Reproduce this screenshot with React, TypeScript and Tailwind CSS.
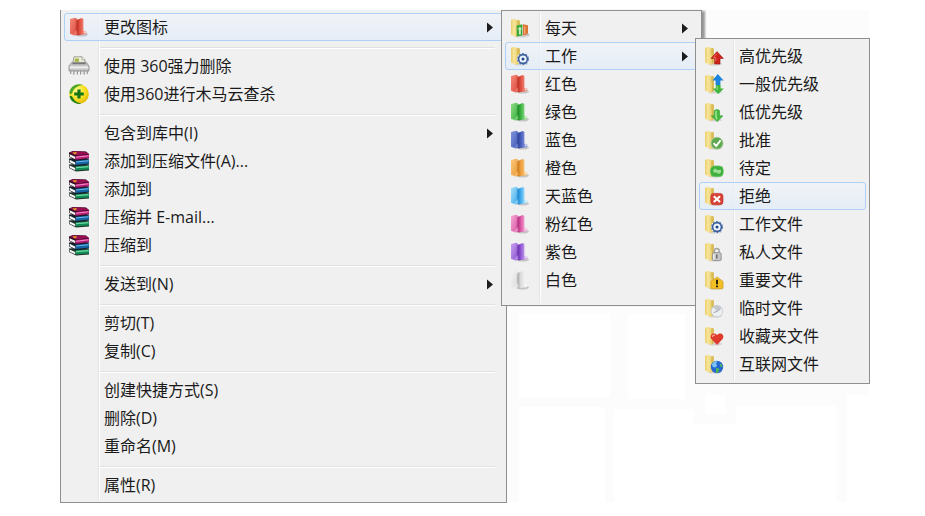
import { useState } from "react";
import type { ReactNode } from "react";
import clsx from "clsx";

type Item = {
  label: string;
  icon?: ReactNode;
  arrow?: boolean;
  sub?: ReactNode;
};

/* ── Icons ── */

function ColorFolder({ id, light, mid, dark }: { id: string; light: string; mid: string; dark: string }) {
  return (
    <svg width="22" height="22" viewBox="0 0 22 22" aria-hidden="true">
      <defs>
        <linearGradient id={`${id}-a`} x1="0" x2="1" y1="0" y2="1">
          <stop offset="0" stopColor={light} />
          <stop offset="1" stopColor={mid} />
        </linearGradient>
        <linearGradient id={`${id}-b`} x1="0" x2="1" y1="0" y2="0">
          <stop offset="0" stopColor={dark} />
          <stop offset="0.35" stopColor={mid} />
          <stop offset="1" stopColor={light} />
        </linearGradient>
      </defs>
      <ellipse cx="13.5" cy="18.6" rx="6.5" ry="1.9" fill="#000" opacity="0.18" />
      <path d="M2 3 L7.4 1.8 L9 2.8 V18.4 L6.6 19.4 L2 17.8 Z" fill={`url(#${id}-a)`} />
      <path d="M7.8 5 L9 3.6 V18.6 L7.8 19 Z" fill={dark} opacity="0.5" />
      <path d="M9 3.8 L13.8 2 L15.4 3 V14.4 L16.4 15.4 V18.2 L9.6 19.4 L8.6 18.8 Z" fill={`url(#${id}-b)`} />
      <path d="M4.6 19 L8.6 14 L9.6 17.8 L6.8 19.6 Z" fill={light} opacity="0.6" />
      <circle cx="16.6" cy="16.6" r="1.9" fill={light} opacity="0.8" />
      <circle cx="16.8" cy="16.2" r="0.9" fill="#fff" opacity="0.7" />
    </svg>
  );
}

function YellowFolder({ children }: { children: ReactNode }) {
  return (
    <svg width="22" height="22" viewBox="0 0 22 22" aria-hidden="true">
      <defs>
        <linearGradient id="yf-a" x1="0" x2="1" y1="0" y2="0">
          <stop offset="0" stopColor="#e9cd6c" />
          <stop offset="0.4" stopColor="#f8e69c" />
          <stop offset="1" stopColor="#e6c965" />
        </linearGradient>
      </defs>
      <ellipse cx="12" cy="19" rx="7" ry="1.6" fill="#000" opacity="0.12" />
      <path d="M7 3.4 L9.8 2.8 L11 4 V18 L7 19 Z" fill="#dcbf5c" />
      <path d="M2 2.8 L5.4 1.8 L8.8 3.8 V9 L9.6 10 V19 L7.4 20 L2 17.6 Z" fill="url(#yf-a)" />
      <path d="M8.8 4 V9 L9.6 10 V19" fill="none" stroke="#c9a843" strokeWidth="0.5" />
      {children}
    </svg>
  );
}

const Gear = () => (
  <g>
    <circle cx="14" cy="14" r="6" fill="#fff" />
    <circle cx="14" cy="14" r="5.4" fill="none" stroke="#5f7fae" strokeWidth="1.2" strokeDasharray="2.2 1.2" />
    <circle cx="14" cy="14" r="4.4" fill="#eef4fb" stroke="#3a5f9c" strokeWidth="1.6" />
    <circle cx="14" cy="14" r="1.5" fill="#1f4687" />
  </g>
);

const Shredder = () => (
  <svg width="22" height="22" viewBox="0 0 22 22" aria-hidden="true">
    <path d="M6 1.8 H14 L17 4.6 V9 H4.6 Z" fill="#eef0dc" stroke="#8b8b83" strokeWidth="0.8" />
    <path d="M7 3.6 H11 V6.8 H6.4 Z" fill="#a8b545" />
    <path d="M14 1.8 V4.8 H17" fill="#fff" stroke="#8b8b83" strokeWidth="0.7" />
    <path d="M3.6 7.4 H18.4 L21 11.2 V16 H1 V11.2 Z" fill="#c6c6c6" stroke="#858585" strokeWidth="0.8" />
    <path d="M4.8 7.8 H17.2 L18 9.2 H4 Z" fill="#777" />
    <path d="M1.8 11.4 H20.2 V13.4 H1.8 Z" fill="#eee" />
    <path d="M3 15.6 L2.6 19 M6.2 15.6 L5.6 19.6 M9.4 15.6 V19.6 M12.6 15.6 V19.6 M15.8 15.6 L16.4 19.6 M19 15.6 L19.4 19" stroke="#959595" strokeWidth="1.2" />
  </svg>
);

const Safe360 = () => (
  <svg width="22" height="22" viewBox="0 0 22 22" aria-hidden="true">
    <defs>
      <radialGradient id="s360" cx="0.4" cy="0.35" r="0.7">
        <stop offset="0" stopColor="#fffb8a" />
        <stop offset="0.6" stopColor="#f8e020" />
        <stop offset="1" stopColor="#e2b300" />
      </radialGradient>
    </defs>
    <circle cx="11" cy="11" r="9.8" fill="url(#s360)" />
    <path d="M1.4 9.6 C2.2 3.6 8.6 -0.2 15 2 C9.6 2.6 6 5 4.6 9 C4 11.4 2.2 12 1.4 9.6 Z" fill="#4aa82c" />
    <path d="M1.6 13.6 C2.8 18.6 8 22 13.6 20.6 C9 19.6 6.6 18 5.4 15.4 C4.4 13.2 2.4 11.6 1.6 13.6 Z" fill="#1f7f1c" />
    <path d="M9.4 6.4 H12.6 V9.4 H15.8 V12.6 H12.6 V15.6 H9.4 V12.6 H6.2 V9.4 H9.4 Z" fill="#147416" />
  </svg>
);

const Books = () => (
  <svg width="22" height="22" viewBox="0 0 22 22" aria-hidden="true">
    {/* green */}
    <path d="M1 14.4 L15 13.6 L21 15 V20.4 L8 21.4 L1 18 Z" fill="#20332b" />
    <path d="M7.6 16.4 L21 15.2 V19.6 L7.6 20.6 Z" fill="#128a55" />
    <path d="M8 17.6 L20.6 16.6" stroke="#6fd8a6" strokeWidth="1.1" />
    <path d="M1.6 15.6 L7.2 18 V20.2 L1.6 17.8 Z" fill="#f4f4f4" />
    {/* blue */}
    <path d="M1 8.4 L15 7.6 L21 9.4 V14.4 L8 16 L1 12.6 Z" fill="#16202c" />
    <path d="M7.6 10.8 L21 9.6 V13.6 L7.6 15 Z" fill="#1564a4" />
    <path d="M8 12 L20.6 10.8" stroke="#6cb8e6" strokeWidth="1.1" />
    <path d="M1.6 9.8 L7.2 12.4 V14.8 L1.6 12.2 Z" fill="#f4f4f4" />
    {/* magenta */}
    <path d="M1 2.4 L5 1 L18 1.6 L21 4 V8.6 L8 10.4 L1 6.8 Z" fill="#2a0e1e" />
    <path d="M1.6 2.4 L5.2 1.2 L17.8 1.8 L20.6 4 L8 5.6 Z" fill="#960d52" />
    <path d="M7.6 6 L21 4.6 V8 L7.6 9.8 Z" fill="#b51c74" />
    <path d="M8 7.2 L20.6 5.8" stroke="#f48cc6" strokeWidth="1.1" />
    <path d="M1.6 4.2 L7.2 6.8 V9.2 L1.6 6.6 Z" fill="#f4f4f4" />
    <path d="M5 2.6 L8.4 3.8 M8.4 2.2 L6 4" stroke="#e2a51e" strokeWidth="1.1" />
  </svg>
);

const Arrow = () => (
  <svg className="mr-[9px] ml-auto shrink-0" width="6" height="11" viewBox="0 0 6 11" aria-hidden="true">
    <path d="M0 0.5 L6 5.5 L0 10.5 Z" fill="#1c1c1c" />
  </svg>
);

const RED = <ColorFolder id="red" light="#f3897b" mid="#dd4a3c" dark="#b52c22" />;

/* ── Data ── */

const PRIORITY: Item[] = [
  {
    label: "高优先级",
    icon: (
      <YellowFolder>
        <path d="M14 6.6 L20.4 13.4 H17 V19 H11.6 V13.4 H8 Z" fill="#cf241b" stroke="#9c130e" strokeWidth="0.6" />
        <path d="M14 8.4 L10.4 12.6 H12.8 V16" fill="none" stroke="#ef7166" strokeWidth="0.9" />
      </YellowFolder>
    ),
  },
  {
    label: "一般优先级",
    icon: (
      <YellowFolder>
        <path d="M14.8 1 L20.6 7.4 H17.4 V12 H12.6 V7.4 H9.4 Z" fill="#1c84dd" />
        <path d="M15.2 21 L9.6 15.4 H12.8 V12 H17.6 V15.4 H20.8 Z" fill="#3fb53a" />
        <path d="M14.2 13 V17" stroke="#a4e69a" strokeWidth="0.9" />
      </YellowFolder>
    ),
  },
  {
    label: "低优先级",
    icon: (
      <YellowFolder>
        <path d="M14.2 20.6 L8.2 14.8 H11.2 V9.6 Q13.8 7.2 16.6 9.6 V14.8 H20 Z" fill="#43b83c" stroke="#2f9a2d" strokeWidth="0.5" />
        <path d="M13 9.8 V16.4 L14.2 18" fill="none" stroke="#b0eba4" strokeWidth="1.3" />
      </YellowFolder>
    ),
  },
  {
    label: "批准",
    icon: (
      <YellowFolder>
        <circle cx="14" cy="14.2" r="6" fill="#5fa851" stroke="#a5cf9b" strokeWidth="0.8" />
        <path d="M10.6 14.2 L13.2 17 L17.6 11.2" fill="none" stroke="#fff" strokeWidth="1.9" />
      </YellowFolder>
    ),
  },
  {
    label: "待定",
    icon: (
      <YellowFolder>
        <rect x="7.6" y="9" width="12.6" height="10.6" rx="4" fill="#3fb03f" stroke="#5cc15a" strokeWidth="0.8" />
        <path d="M10 13.6 L12 11.2 L14 13 H18 V15.2 L16 17 L13.6 15.6 H10.6 Z" fill="#9fe096" />
      </YellowFolder>
    ),
  },
  {
    label: "拒绝",
    icon: (
      <YellowFolder>
        <rect x="7.8" y="8.4" width="12.2" height="11.4" rx="3" fill="#d94236" stroke="#b92c22" strokeWidth="0.6" />
        <path d="M10.8 11.2 L17 17 M17 11.2 L10.8 17" stroke="#fff" strokeWidth="2.1" />
      </YellowFolder>
    ),
  },
  { label: "工作文件", icon: <YellowFolder><Gear /></YellowFolder> },
  {
    label: "私人文件",
    icon: (
      <YellowFolder>
        <path d="M11.4 13 V9.8 Q11.4 7.4 13.8 7.4 Q16.2 7.4 16.2 9.8 V13" fill="none" stroke="#a5a5a5" strokeWidth="1.5" />
        <rect x="9.4" y="11.6" width="8.8" height="8" rx="1.6" fill="#c6c6c6" stroke="#888" strokeWidth="0.8" />
        <path d="M13.8 13.6 V17.4" stroke="#5e5e5e" strokeWidth="1.3" />
        <path d="M10.8 12.8 V18.6" stroke="#fff" strokeWidth="1" />
      </YellowFolder>
    ),
  },
  {
    label: "重要文件",
    icon: (
      <YellowFolder>
        <path d="M14 8 L20 12.4 V19 Q20 19.8 19 19.8 H9 Q8 19.8 8 19 V12.4 Z" fill="#f2bf24" stroke="#cf9a12" strokeWidth="0.7" />
        <path d="M14 10.8 V15.2 M14 16.4 V18.2" stroke="#2c2205" strokeWidth="2" />
      </YellowFolder>
    ),
  },
  {
    label: "临时文件",
    icon: (
      <YellowFolder>
        <circle cx="14" cy="14.2" r="5.8" fill="#eceff1" stroke="#c8ccd0" strokeWidth="0.9" />
        <path d="M14 14.2 L18.6 10.6 A5.8 5.8 0 0 0 10 10 Z" fill="#c3c8cc" />
        <path d="M14 14.4 L17.6 11.8 M14 14.4 L10.6 15.6" stroke="#a3a8ac" strokeWidth="1" />
      </YellowFolder>
    ),
  },
  {
    label: "收藏夹文件",
    icon: (
      <YellowFolder>
        <path d="M14 20 L8.2 13.8 C6.8 11 8.2 8.4 10.8 8.4 C12.4 8.4 13.4 9 14 10 C14.6 9 15.8 8.4 17.2 8.4 C19.8 8.4 21.2 11 19.8 13.8 Z" fill="#e03a2d" />
        <path d="M9.6 12 C9.4 10.6 10.4 10 11.8 10.4" fill="none" stroke="#fba79d" strokeWidth="1.4" />
      </YellowFolder>
    ),
  },
  {
    label: "互联网文件",
    icon: (
      <YellowFolder>
        <circle cx="14" cy="14" r="6.2" fill="#2467d2" />
        <path d="M9 11 C10.4 8.6 13 7.8 14.4 8.4 L13 11 L14.2 12.6 L12.2 14.8 L9.4 13.6 Z" fill="#7cc4f2" />
        <path d="M13 15 L16.2 15.6 L15.4 19.4 L13 20 Z" fill="#4fb456" />
        <path d="M16.6 10.4 L19 11.4 L19.4 14.4 L17.4 13.6 Z" fill="#55b85c" />
      </YellowFolder>
    ),
  },
];

const ICON_GROUPS: Item[] = [
  {
    label: "每天",
    icon: (
      <YellowFolder>
        <path d="M7.6 8.4 L13.4 7.2 V18.4 L7.6 19.4 Z" fill="#3da63b" />
        <path d="M14 7.2 L19 8.2 V17.6 L14 18.6 Z" fill="#dc7434" />
        <path d="M10 17.6 V12.4 H8.6 L11 9.4 L13 12.4 H11.8 V17.4 Z" fill="#c6eebb" />
        <path d="M15.8 9.4 V17" stroke="#f7bd92" strokeWidth="1" />
        <circle cx="19" cy="17.8" r="1.4" fill="#b9c2cc" />
      </YellowFolder>
    ),
    arrow: true,
  },
  {
    label: "工作",
    icon: <YellowFolder><Gear /></YellowFolder>,
    arrow: true,
    sub: <Menu label="工作" items={[PRIORITY]} initial="拒绝" className="absolute -top-1 left-full z-20 -ml-[3px] w-[175px] border pt-[3px] pb-[5px]" />,
  },
  { label: "红色", icon: RED },
  { label: "绿色", icon: <ColorFolder id="green" light="#8fdc86" mid="#35ad3c" dark="#1e8528" /> },
  { label: "蓝色", icon: <ColorFolder id="blue" light="#8094dc" mid="#4259b6" dark="#2b3f92" /> },
  { label: "橙色", icon: <ColorFolder id="orange" light="#fbc778" mid="#ec9a3a" dark="#c67718" /> },
  { label: "天蓝色", icon: <ColorFolder id="sky" light="#a5e0fb" mid="#3ba7ea" dark="#1f82ca" /> },
  { label: "粉红色", icon: <ColorFolder id="pink" light="#f4aad8" mid="#d9519f" dark="#a92c7b" /> },
  { label: "紫色", icon: <ColorFolder id="purple" light="#c9a4f0" mid="#8a4fd0" dark="#6530a6" /> },
  { label: "白色", icon: <ColorFolder id="white" light="#f4f4f4" mid="#dadada" dark="#a2a2a2" /> },
];

const MAIN: Item[][] = [
  [
    {
      label: "更改图标",
      icon: RED,
      arrow: true,
      sub: <Menu label="更改图标" items={[ICON_GROUPS]} initial="工作" className="absolute -top-[3px] left-full z-10 -ml-0.5 w-[201px] border pt-[3px] pb-[11px] shadow-[4px_0_2px_-1px_rgba(0,0,0,0.4)]" />,
    },
  ],
  [
    { label: "使用 360强力删除", icon: <Shredder /> },
    { label: "使用360进行木马云查杀", icon: <Safe360 /> },
  ],
  [
    { label: "包含到库中(I)", arrow: true },
    { label: "添加到压缩文件(A)...", icon: <Books /> },
    { label: "添加到", icon: <Books /> },
    { label: "压缩并 E-mail...", icon: <Books /> },
    { label: "压缩到", icon: <Books /> },
  ],
  [{ label: "发送到(N)", arrow: true }],
  [{ label: "剪切(T)" }, { label: "复制(C)" }],
  [{ label: "创建快捷方式(S)" }, { label: "删除(D)" }, { label: "重命名(M)" }],
  [{ label: "属性(R)" }],
];

/* ── Menu ── */

function Menu({ label, items, initial, className }: { label: string; items: Item[][]; initial: string; className: string }) {
  const [active, setActive] = useState(initial);

  return (
    <ul
      role="menu"
      aria-label={label}
      className={clsx(
        "border-[#8f8f8f] bg-[#f0f0f0] px-[3px]",
        "before:absolute before:inset-y-0.5 before:left-[37px] before:w-0.5 before:border-r before:border-l before:border-r-white before:border-l-[#e3e4e4]",
        className,
      )}
    >
      {items.map((group, g) => (
        <li key={g} role="none">
          {g > 0 && <div role="separator" className="mt-1.5 mr-2 mb-[3px] ml-9 h-0.5 border-t border-b border-t-[#e0e0e0] border-b-white" />}
          <ul role="group">
            {group.map(item => (
              <li key={item.label} role="none" className="relative">
                <button
                  role="menuitem"
                  aria-haspopup={item.arrow ? "menu" : undefined}
                  onClick={() => setActive(item.label)}
                  className={clsx(
                    "relative flex h-7 w-full items-center rounded-[3px] border text-left whitespace-nowrap",
                    active === item.label
                      ? "border-[#aecff7] bg-linear-to-b from-[#f0f4f9]/70 to-[#e2ecf8]/80"
                      : "border-transparent",
                  )}
                >
                  <span className="flex w-7 shrink-0 justify-center">{item.icon}</span>
                  <span className="ml-[11px]">{item.label}</span>
                  {item.arrow && <Arrow />}
                </button>
                {active === item.label && item.sub}
              </li>
            ))}
          </ul>
        </li>
      ))}
    </ul>
  );
}

/* faint tiles of the desktop behind the menus */
function Tiles() {
  return (
    <svg className="absolute top-[10px] left-[507px] -z-10" width="362" height="492" viewBox="0 0 362 492" aria-hidden="true">
      <path d="M0 0 H362 V492 H0 Z" fill="#fcfcfc" />
      <path d="M12 304 H103 V387 H12 Z M121 304 H178 V389 H121 Z M12 397 H98 V492 H12 Z M107 399 H187 V414 H229 V396 H329 V492 H107 Z M198 385 H219 V404 H198 Z M340 385 H362 V492 H340 Z" fill="#fff" />
    </svg>
  );
}

export default function App() {
  return (
    <main className="relative isolate min-h-screen overflow-hidden bg-white px-[60px] pt-[10px] font-['Open_Sans','Noto_Sans_CJK_SC',sans-serif] text-base leading-6 text-[#1a1a1a]">
      <Tiles />
      <Menu
        label="文件"
        items={MAIN}
        initial="更改图标"
        className="relative w-[447px] border-r border-b border-l pt-[3px] pb-[3px]"
      />
    </main>
  );
}
